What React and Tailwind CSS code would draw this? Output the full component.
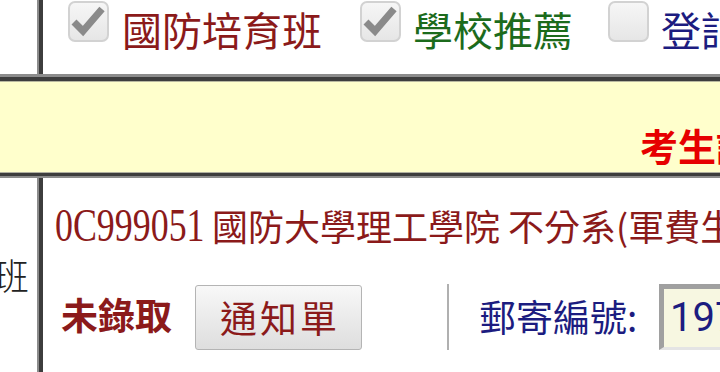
function CheckBox({ checked, className = '' }) {
  return (
    <div
      className={`relative w-[41px] h-[41px] shrink-0 rounded-[7px] border-2 border-[#d2d2d2] bg-gradient-to-b from-[#f6f6f6] to-[#e6e6e6] ${className}`}
    >
      {checked && (
        <svg className="absolute -left-[2px] -top-[2px]" width="41" height="41" viewBox="0 0 41 41" fill="none">
          <path d="M6 21 L15 30 L34 8" stroke="#8a8a8a" strokeWidth="7" strokeLinejoin="miter" />
        </svg>
      )}
    </div>
  );
}

function VLine() {
  return (
    <div className="flex shrink-0">
      <div className="w-[2px] bg-[#8c8c8c]" />
      <div className="w-[4px] bg-[#3d3d3d]" />
    </div>
  );
}

export default function App() {
  return (
    <div className="w-[720px] h-[372px] overflow-hidden bg-white font-['Noto_Sans_CJK_TC',sans-serif]">
      {/* filter row */}
      <div className="flex h-[74px]">
        <div className="w-[37px] shrink-0" />
        <VLine />
        <div className="flex items-start pl-[25px] pt-[1px] whitespace-nowrap">
          <CheckBox checked />
          <span className="ml-[13px] mt-[5px] shrink-0 text-[40px] leading-[46px] text-[#8b1a1a]">國防培育班</span>
          <CheckBox checked className="ml-[38px]" />
          <span className="ml-[12px] mt-[5px] shrink-0 text-[40px] leading-[46px] text-[#1c6b1c]">學校推薦</span>
          <CheckBox className="ml-[35px]" />
          <span className="ml-[12px] mt-[5px] shrink-0 text-[40px] leading-[46px] text-[#1c1c80]">登記</span>
        </div>
      </div>

      {/* header band */}
      <div className="h-[3px] bg-[#8c8c8c]" />
      <div className="h-[4px] bg-[#3d3d3d]" />
      <div className="h-[1px] bg-[#b8b8a0]" />
      <div className="h-[90px] bg-[#ffffcc] pl-[640px] pt-[41px] whitespace-nowrap overflow-hidden">
        <span className="text-[38px] leading-[44px] font-bold text-[#e60000]">考生證明</span>
      </div>
      <div className="h-[1px] bg-[#b0b0a0]" />
      <div className="h-[3px] bg-[#3d3d3d]" />
      <div className="h-[2px] bg-[#8c8c8c]" />

      {/* result row */}
      <div className="flex h-[194px]">
        <div className="w-[37px] shrink-0 flex justify-end items-center overflow-hidden pr-[8px] whitespace-nowrap">
          <span className="shrink-0 text-[36px] leading-[44px] font-light text-[#222] mb-[2px]">育班</span>
        </div>
        <VLine />
        <div className="flex flex-col pl-[12px] pt-[22px] whitespace-nowrap">
          <div className="h-[50px] leading-[50px] text-[#8b1a1a]">
            <span className="inline-block w-[152px] font-['Liberation_Serif',serif] text-[46px]">
              <span className="inline-block origin-left scale-x-[0.78]">0C999051</span>
            </span>
            <span className="ml-[5px] text-[36px]">國防大學理工學院 不分系(軍費生)</span>
          </div>
          <div className="mt-[34px] h-[66px] flex items-center">
            <span className="ml-[6px] w-[134px] shrink-0 text-[37px] font-bold text-[#8b1a1a] mb-[4px]">未錄取</span>
            <button className="w-[167px] h-[65px] shrink-0 rounded-[3px] border border-[#b4b4b4] bg-gradient-to-b from-[#f8f8f8] to-[#dedede] text-[37px] leading-none tracking-[3px] pl-[3px] text-[#8b1a1a]">
              通知單
            </button>
            <div className="ml-[85px] w-[2px] h-[66px] shrink-0 bg-[#b0b0b0]" />
            <span className="ml-[30px] w-[180px] shrink-0 text-[37px] text-[#1c1c80]">郵寄編號:</span>
            <div className="w-[120px] h-[66px] shrink-0 border-l-[5px] border-t-[5px] border-r-[2px] border-b-[3px] border-l-[#a0a0a0] border-t-[#a0a0a0] border-r-[#e0e0e0] border-b-[#e4e4e4] bg-[#f7f7e1] flex items-center pl-[6px]">
              <span className="font-['Roboto',sans-serif] text-[40px] leading-none text-[#1c1c80]">1972</span>
            </div>
          </div>
        </div>
      </div>
    </div>
  );
}
